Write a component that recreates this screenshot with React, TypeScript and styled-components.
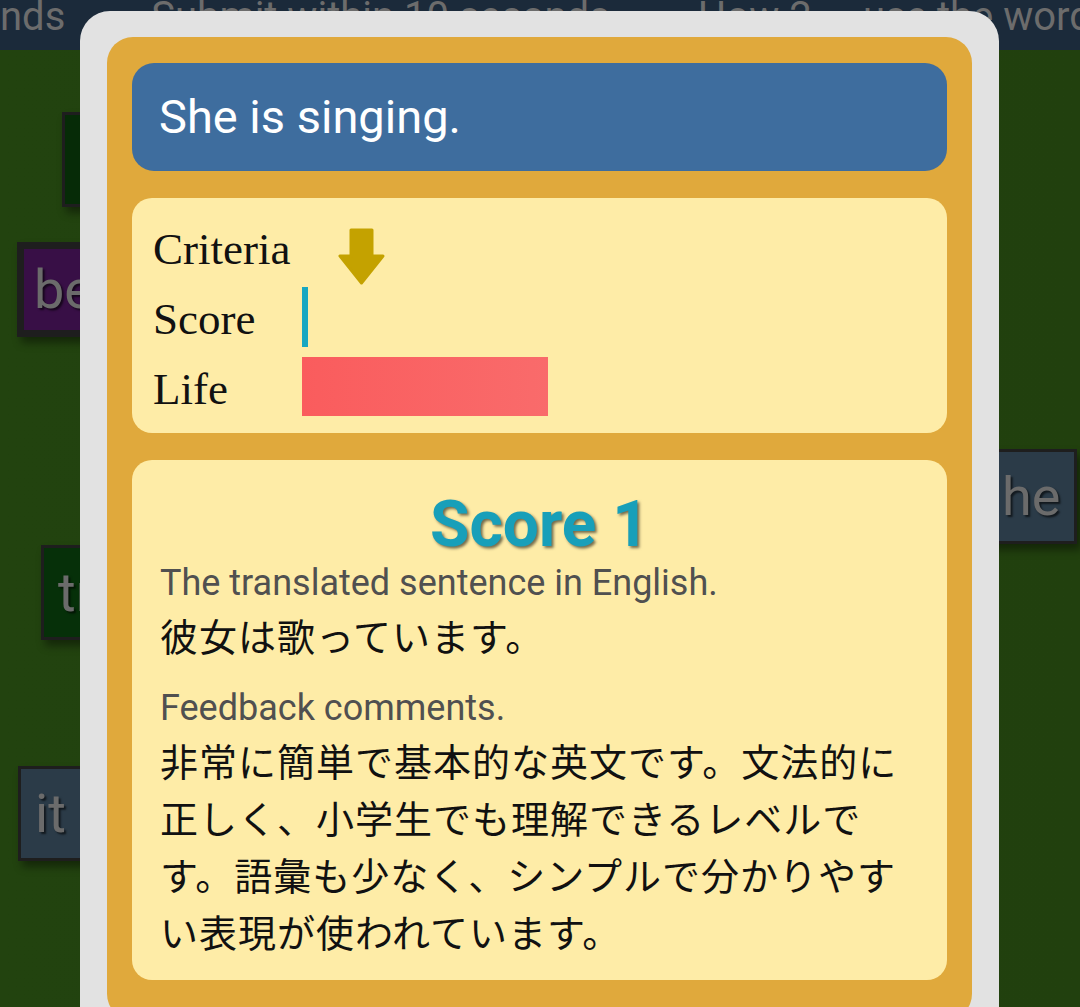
import React from 'react';
import styled, { createGlobalStyle } from 'styled-components';

const GlobalStyle = createGlobalStyle`
  html, body {
    margin: 0;
    padding: 0;
    height: 100%;
    overflow: hidden;
  }
  body {
    font-family: Roboto, "Noto Sans CJK JP", sans-serif;
  }
`;

const Page = styled.div`
  position: relative;
  display: flex;
  flex-direction: column;
  width: 100%;
  height: 100vh;
  overflow: hidden;
  background-color: #22420f;
`;

const TopBar = styled.div`
  height: 50px;
  flex-shrink: 0;
  display: flex;
  align-items: flex-start;
  gap: 14px;
  background-color: #1b2a3a;
  color: #6c6c6c;
  font-size: 40px;
  line-height: 44px;
  white-space: nowrap;
  overflow: hidden;
`;

const TickerText = styled.span`
  margin-top: -5px;
`;

const TickerIcon = styled.span<{ $gap: number }>`
  width: 22px;
  height: 30px;
  margin-top: -8px;
  margin-left: ${props => props.$gap}px;
  border-radius: 4px;
  background: linear-gradient(135deg, #4e5c64, #2c3a44);
`;

const Board = styled.div`
  position: relative;
  flex: 1;
  background: linear-gradient(90deg, #22430f, #21400e);
`;

const Tile = styled.div<{ $x: number; $y: number; $bg: string; $border?: number }>`
  position: absolute;
  left: ${props => props.$x}px;
  top: ${props => props.$y - 50}px;
  height: 95px;
  box-sizing: border-box;
  display: flex;
  align-items: center;
  padding: 0 ${props => (props.$border && props.$border > 4 ? 10 : 14)}px;
  min-width: 90px;
  background-color: ${props => props.$bg};
  border: ${props => props.$border || 3}px solid #1e1e1e;
  box-shadow: 4px 6px 8px rgba(0, 0, 0, 0.4);
  color: #6b6b6b;
  font-size: 54px;
  text-shadow: 2px 2px 2px rgba(0, 0, 0, 0.6);
`;

const Modal = styled.div`
  position: absolute;
  left: 80px;
  top: 11px;
  width: 919px;
  box-sizing: border-box;
  padding: 26px 27px 30px;
  border-radius: 30px;
  background-color: #e2e2e2;
`;

const Sheet = styled.div`
  display: flex;
  flex-direction: column;
  gap: 27px;
  padding: 26px 25px 40px;
  border-radius: 26px;
  background-color: #e0a93c;
`;

const Question = styled.div`
  height: 108px;
  padding: 0 27px;
  border-radius: 22px;
  background-color: #3e6d9e;
  color: #ffffff;
  font-size: 47px;
  line-height: 108px;
`;

const Panel = styled.div`
  border-radius: 20px;
  background-color: #feeca7;
`;

const StatsPanel = styled(Panel)`
  display: grid;
  grid-template-columns: 149px 1fr;
  grid-auto-rows: 60px;
  row-gap: 10px;
  padding: 19px 21px 16px;
`;

const StatLabel = styled.div`
  font-family: "Liberation Serif", serif;
  font-size: 45px;
  line-height: 60px;
  padding-top: 2px;
  color: #111111;
`;

const StatCell = styled.div`
  display: flex;
  align-items: flex-start;
`;

const Marker = styled.svg<{ $offset: number }>`
  margin-left: ${props => props.$offset}px;
  margin-top: 11px;
`;

const Bar = styled.div<{ $fill: string }>`
  height: 60px;
  background: ${props => props.$fill};
`;

const ResultPanel = styled(Panel)`
  padding: 27px 28px 21px;
`;

const ScoreTitle = styled.div`
  text-align: center;
  font-size: 64px;
  font-weight: 700;
  line-height: 76px;
  color: #189fb9;
  text-shadow: 2px 2px 3px rgba(0, 0, 0, 0.55);
`;

const FieldLabel = styled.div<{ $gap?: number }>`
  margin-top: ${props => props.$gap || 0}px;
  font-size: 36px;
  line-height: 40px;
  color: #505050;
`;

const JpText = styled.div<{ $lh: number }>`
  margin-top: 3px;
  font-family: "Noto Sans CJK JP", sans-serif;
  font-size: 38px;
  letter-spacing: 1px;
  line-height: ${props => props.$lh}px;
  color: #111111;
`;

const stats = {
  criteria: 36,
  score: 6,
  life: 246,
};

const ArrowDown = () => (
  <Marker $offset={stats.criteria} width="47" height="57" viewBox="0 0 47 57">
    <path
      d="M13 2 H34 V28 H45 L23.5 55 L2 28 H13 Z"
      fill="#c4a200"
      stroke="#c4a200"
      strokeWidth="3"
      strokeLinejoin="round"
    />
  </Marker>
);

const App: React.FC = () => {
  return (
    <>
      <GlobalStyle />
      <Page>
        <TopBar>
          <TickerText>nds</TickerText>
          <TickerIcon $gap={58} />
          <TickerText>Submit within 10 seconds</TickerText>
          <TickerIcon $gap={60} />
          <TickerText>How 2 ... use the words</TickerText>
        </TopBar>
        <Board>
          <Tile $x={62} $y={112} $bg="#062b07" />
          <Tile $x={17} $y={242} $bg="#380f46" $border={7}>be</Tile>
          <Tile $x={41} $y={545} $bg="#063009">tr</Tile>
          <Tile $x={18} $y={766} $bg="#2b3b48">it</Tile>
          <Tile $x={985} $y={449} $bg="#2b3b48">he</Tile>
        </Board>
        <Modal>
          <Sheet>
            <Question>She is singing.</Question>
            <StatsPanel>
              <StatLabel>Criteria</StatLabel>
              <StatCell>
                <ArrowDown />
              </StatCell>
              <StatLabel>Score</StatLabel>
              <StatCell>
                <Bar $fill="#17a7c1" style={{ width: stats.score }} />
              </StatCell>
              <StatLabel>Life</StatLabel>
              <StatCell>
                <Bar
                  $fill="linear-gradient(90deg, #fa5c5d, #f96b6b)"
                  style={{ width: stats.life, height: 59 }}
                />
              </StatCell>
            </StatsPanel>
            <ResultPanel>
              <ScoreTitle>Score 1</ScoreTitle>
              <FieldLabel>The translated sentence in English.</FieldLabel>
              <JpText $lh={58}>彼女は歌っています。</JpText>
              <FieldLabel $gap={24}>Feedback comments.</FieldLabel>
              <JpText $lh={57}>
                非常に簡単で基本的な英文です。文法的に正しく、小学生でも理解できるレベルです。語彙も少なく、シンプルで分かりやすい表現が使われています。
              </JpText>
            </ResultPanel>
          </Sheet>
        </Modal>
      </Page>
    </>
  );
};

export default App;
